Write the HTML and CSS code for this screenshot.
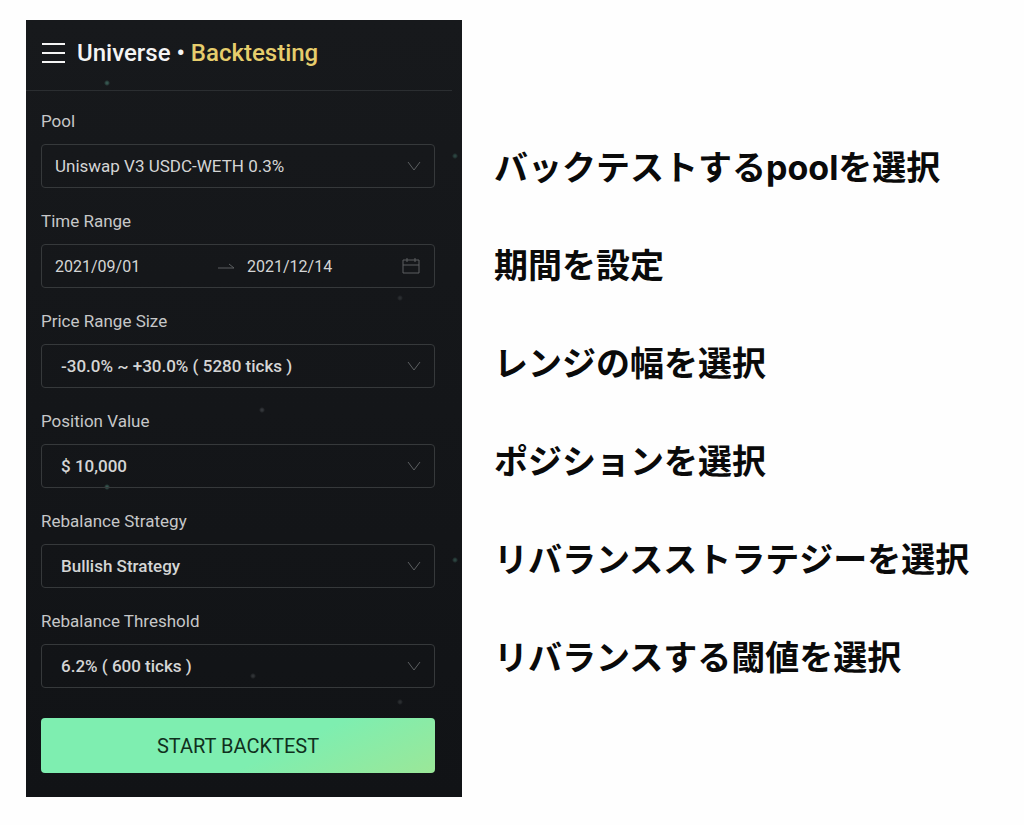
FILE: index.html
```html
<!DOCTYPE html>
<html lang="ja">
<head>
    <meta charset="UTF-8">
    <meta name="viewport" content="width=device-width, initial-scale=1.0">
    <title>Universe Backtesting</title>
    <link rel="stylesheet" href="styles.css">
</head>
<body>
    <main class="page">
        <section class="panel">
            <!-- Header -->
            <header class="panel-header">
                <button type="button" class="menu-button" aria-label="Menu">
                    <svg width="24" height="22" viewBox="0 0 24 22" fill="none" stroke="currentColor" stroke-width="2">
                        <path d="M1 2h23M1 11h23M1 20h23"/>
                    </svg>
                </button>
                <h1>Universe • <span class="highlight">Backtesting</span></h1>
            </header>

            <!-- Backtest settings -->
            <form class="settings">
                <div class="field">
                    <label for="pool">Pool</label>
                    <div class="control">
                        <select id="pool" class="regular">
                            <option>Uniswap V3 USDC-WETH 0.3%</option>
                        </select>
                        <svg class="chevron" viewBox="0 0 14 10"><path d="M1 1l6 8 6-8"/></svg>
                    </div>
                </div>

                <div class="field">
                    <label for="start">Time Range</label>
                    <div class="control date-range">
                        <input type="text" id="start" value="2021/09/01">
                        <svg class="arrow" viewBox="0 0 18 8"><path d="M1 6h16l-5-4"/></svg>
                        <input type="text" id="end" value="2021/12/14" aria-label="End date">
                        <svg class="calendar" viewBox="0 0 18 18"><path d="M1 3h16v13H1zM1 8h16M5 1v4M13 1v4"/></svg>
                    </div>
                </div>

                <div class="field">
                    <label for="range">Price Range Size</label>
                    <div class="control">
                        <select id="range">
                            <option>-30.0% ~ +30.0% ( 5280 ticks )</option>
                        </select>
                        <svg class="chevron" viewBox="0 0 14 10"><path d="M1 1l6 8 6-8"/></svg>
                    </div>
                </div>

                <div class="field">
                    <label for="position">Position Value</label>
                    <div class="control">
                        <select id="position">
                            <option>$ 10,000</option>
                        </select>
                        <svg class="chevron" viewBox="0 0 14 10"><path d="M1 1l6 8 6-8"/></svg>
                    </div>
                </div>

                <div class="field">
                    <label for="strategy">Rebalance Strategy</label>
                    <div class="control">
                        <select id="strategy">
                            <option>Bullish Strategy</option>
                        </select>
                        <svg class="chevron" viewBox="0 0 14 10"><path d="M1 1l6 8 6-8"/></svg>
                    </div>
                </div>

                <div class="field">
                    <label for="threshold">Rebalance Threshold</label>
                    <div class="control">
                        <select id="threshold">
                            <option>6.2% ( 600 ticks )</option>
                        </select>
                        <svg class="chevron" viewBox="0 0 14 10"><path d="M1 1l6 8 6-8"/></svg>
                    </div>
                </div>

                <button type="button" class="start-button">START BACKTEST</button>
            </form>
        </section>

        <!-- Explanation of each setting -->
        <section class="notes">
            <p>バックテストするpoolを選択</p>
            <p>期間を設定</p>
            <p>レンジの幅を選択</p>
            <p>ポジションを選択</p>
            <p>リバランスストラテジーを選択</p>
            <p>リバランスする閾値を選択</p>
        </section>
    </main>
</body>
</html>
```

FILE: styles.css
```css
* {
    box-sizing: border-box;
}

body {
    margin: 0;
    background: #fefefe;
    font-family: Roboto, "Noto Sans CJK JP", sans-serif;
}

.page {
    display: flex;
    align-items: flex-start;
    gap: 32px;
    padding: 20px 26px;
}

/* Dark panel with small stars in the background */
.panel {
    flex: 0 1 436px;
    padding-bottom: 24px;
    background-color: #141619;
    background-image:
        radial-gradient(circle at 81px 63px, #35564f 1px, transparent 3px),
        radial-gradient(circle at 429px 136px, #2b4440 1px, transparent 3px),
        radial-gradient(circle at 374px 278px, #2a2d30 1px, transparent 3px),
        radial-gradient(circle at 236px 390px, #33363a 1px, transparent 3px),
        radial-gradient(circle at 227px 656px, #2f3235 1px, transparent 3px),
        linear-gradient(#17191c, #111316);
    background-size: 100% 404px, 100% 404px, 100% 404px, 100% 100%, 100% 100%, 100% 100%;
}

.panel-header {
    display: flex;
    align-items: center;
    gap: 12px;
    height: 71px;
    margin-right: 10px;
    padding: 0 15px 4px;
    border-bottom: 1px solid #2b2e31;
    color: #f4f4f4;
}

.menu-button {
    display: flex;
    padding: 0;
    border: none;
    background: none;
    color: inherit;
    cursor: pointer;
}

h1 {
    margin: 0;
    font-size: 24px;
    font-weight: 500;
}

.highlight {
    color: #e6cd6c;
}

/* Form */
.settings {
    display: flex;
    flex-direction: column;
    gap: 23px;
    padding: 20px 27px 0 15px;
}

.field {
    display: flex;
    flex-direction: column;
    gap: 13px;
}

label {
    color: #c6c7c8;
    font-size: 17px;
    line-height: 20px;
}

.control {
    position: relative;
    display: flex;
    align-items: center;
    height: 44px;
    border: 1px solid #36393b;
    border-radius: 4px;
}

select, input {
    width: 100%;
    height: 100%;
    padding: 0 19px;
    border: none;
    outline: none;
    background: none;
    color: #d4d5d5;
    font-family: inherit;
    font-size: 17px;
    font-weight: 500;
    appearance: none;
}

select.regular {
    padding: 0 13px;
    font-weight: 400;
}

option {
    background: #141619;
}

.control svg {
    fill: none;
    stroke: #5c5f61;
}

.chevron {
    position: absolute;
    right: 13px;
    width: 14px;
    height: 10px;
    pointer-events: none;
}

.date-range {
    gap: 12px;
    padding: 0 14px 0 13px;
}

.date-range input {
    flex: 1;
    min-width: 0;
    padding: 0;
    font-size: 16px;
    font-weight: 400;
}

.arrow {
    flex: none;
    width: 18px;
    height: 8px;
    margin-left: 7px;
}

.calendar {
    flex: none;
    width: 18px;
    height: 18px;
}

.start-button {
    height: 55px;
    margin-top: 7px;
    border: none;
    border-radius: 4px;
    background: linear-gradient(155deg, #7eeeb0 60%, #9be798);
    color: #10301d;
    font-family: inherit;
    font-size: 20px;
    cursor: pointer;
}

/* Notes on the right */
.notes {
    display: flex;
    flex: 1;
    flex-direction: column;
    gap: 58px;
    padding-top: 128px;
    color: #0a0a0a;
    font-family: Inter, "Noto Sans CJK JP", sans-serif;
    font-size: 34px;
    font-weight: 700;
    line-height: 40px;
}

.notes p {
    margin: 0;
}
```
